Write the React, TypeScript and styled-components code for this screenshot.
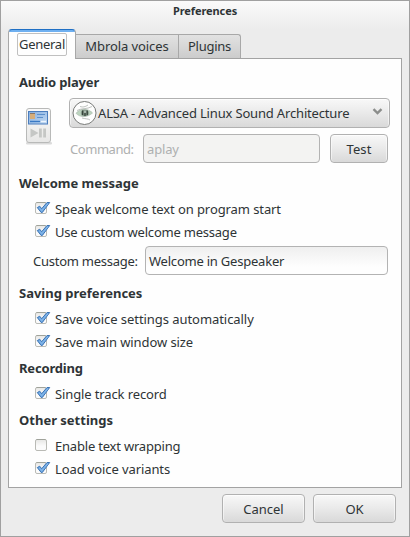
import React from "react";
import styled, { createGlobalStyle, css } from "styled-components";

const GlobalStyle = createGlobalStyle`
  body { margin: 0; }
  * { box-sizing: border-box; }
`;

const raised = css`
  border: 1px solid #b1b1b1;
  border-radius: 4px;
  background: linear-gradient(#f8f8f8, #ebebeb 45%, #d9d9d9);
  box-shadow: inset 0 1px 0 #fdfdfd, inset 1px 0 0 rgba(255, 255, 255, 0.5),
    inset -1px 0 0 rgba(255, 255, 255, 0.5);
`;

const Dialog = styled.main`
  display: flex;
  flex-direction: column;
  width: 410px;
  height: 537px;
  border: 1px solid #a0a0a0;
  background: linear-gradient(#fafafa, #ececec 28px);
  color: #2e3436;
  font: 13px/20px "Noto Sans", "Open Sans", sans-serif;
  white-space: nowrap;
`;

const Title = styled.h1`
  margin: 0;
  height: 28px;
  font-size: 11px;
  line-height: 20px;
  font-weight: bold;
  letter-spacing: -0.08px;
  text-align: center;
`;

const Tracked = styled.span<{ $spacing?: number }>`
  letter-spacing: ${(p) => p.$spacing ?? 0}px;
`;

const TabBar = styled.nav`
  display: flex;
  align-items: flex-end;
  height: 30px;
  margin: 0 7px -1px;
`;

const Tab = styled.div<{ $width: number; $last?: boolean }>`
  display: flex;
  justify-content: center;
  width: ${(p) => p.$width}px;
  height: 25px;
  padding-top: 1px;
  border: 1px solid #a8a8a8;
  border-width: 1px 1px 0 0;
  border-top-right-radius: ${(p) => (p.$last ? 3 : 0)}px;
  background: linear-gradient(#e2e2e2, #cbcbcb);
`;

const ActiveTab = styled.div`
  width: 68px;
  height: 30px;
  padding: 3px 0 0 8px;
  border: 1px solid #a8a8a8;
  border-top: 1px solid #1f6fc4;
  border-bottom: 0;
  border-radius: 4px 4px 0 0;
  background: linear-gradient(#6fb0f0 2px, #fefefe 2px);
  z-index: 1;
`;

const FocusRing = styled.div`
  width: 50px;
  height: 23px;
  padding-left: 1px;
  border: 1px solid #c0c0c0;
  border-radius: 2px;
  line-height: 21px;
`;

const Panel = styled.div`
  width: 394px;
  height: 430px;
  margin-left: 7px;
  padding: 13px 0 0 10px;
  border: 1px solid #a3a3a3;
  background: #fefefe;
`;

const Section = styled.section<{ $after?: number }>`
  margin-bottom: ${(p) => p.$after ?? 3}px;
`;

const Heading = styled.h2`
  margin: 0;
  height: 26px;
  font-size: 13px;
  line-height: 20px;
  font-weight: bold;
`;

const AudioGrid = styled.div`
  display: grid;
  grid-template-columns: 50px 321px;
  align-items: start;
`;

const PlayerIcon = styled.svg`
  width: 28px;
  height: 38px;
  margin: 9px 0 0 6px;
`;

const Combo = styled.div`
  ${raised}
  display: flex;
  align-items: center;
  height: 30px;
  padding: 0 6px 0 2px;
  margin-bottom: 6px;
`;

const ComboLabel = styled.span`
  flex: 1;
  padding-left: 1px;
  letter-spacing: -0.17px;
`;

const ComboArrow = styled.svg`
  width: 11px;
  height: 8px;
  margin-bottom: 2px;
`;

const CommandRow = styled.div`
  display: flex;
  height: 29px;
`;

const FieldLabel = styled.label<{ $width: number; $indent: number; $spacing: number; $muted?: boolean }>`
  width: ${(p) => p.$width}px;
  padding-left: ${(p) => p.$indent}px;
  line-height: 30px;
  letter-spacing: ${(p) => p.$spacing}px;
  color: ${(p) => (p.$muted ? "#aeb0b0" : "inherit")};
`;

const Entry = styled.div<{ $width: number; $disabled?: boolean }>`
  width: ${(p) => p.$width}px;
  height: 29px;
  padding-left: 3px;
  border: 1px solid #b3b3b3;
  border-radius: 4px;
  line-height: 28px;
  color: ${(p) => (p.$disabled ? "#aeb0b0" : "inherit")};
  background: ${(p) => (p.$disabled ? "#f3f3f2" : "linear-gradient(#efefef, #fefefe 20px)")};
`;

const Button = styled.button<{ $width: number; $left?: number }>`
  ${raised}
  width: ${(p) => p.$width}px;
  height: 29px;
  margin-left: ${(p) => p.$left ?? 0}px;
  padding: 0;
  color: inherit;
  font: inherit;
  line-height: 28px;
`;

const CheckRow = styled.label`
  display: flex;
  height: 23px;
  padding-left: 16px;
`;

const CheckIcon = styled.svg`
  width: 16px;
  height: 16px;
  margin: 1px 4px 0 0;
`;

const MessageRow = styled.div`
  display: flex;
  margin-top: 1px;
`;

const Footer = styled.footer`
  display: flex;
  justify-content: flex-end;
  padding: 6px 13px 0 0;
`;

function CheckItem({ text, checked = true, spacing = 0 }: { text: string; checked?: boolean; spacing?: number }) {
  return (
    <CheckRow>
      <CheckIcon viewBox="0 0 16 16">
        <defs>
          <linearGradient id="box" x2="0" y2="1">
            <stop stopColor="#e6e6e4" />
            <stop offset=".6" stopColor="#fbfbfb" />
          </linearGradient>
        </defs>
        <rect x=".5" y="2.5" width="11" height="11" rx="1.5" fill="url(#box)" stroke="#b9bab5" />
        <path d="M1.5 2.5h9" stroke="#a0a39b" />
        {checked && (
          <>
            <path
              d="M2.3 7.6 4.7 6.2 6.7 8.7 12 2.5H14.7L7.3 12.5H6.2Z"
              fill="#6aa5df"
              stroke="#3a72b4"
              strokeLinejoin="round"
            />
            <path d="m4.2 7.8 2.5 2.8L13 3.5" fill="none" stroke="#80b4e8" strokeWidth="1.2" />
          </>
        )}
      </CheckIcon>
      <Tracked $spacing={spacing}>{text}</Tracked>
    </CheckRow>
  );
}

function Player() {
  return (
    <PlayerIcon viewBox="0 0 28 38">
      <defs>
        <linearGradient id="body" x2="0" y2="1">
          <stop stopColor="#f9f9f9" />
          <stop offset="1" stopColor="#e7e7e6" />
        </linearGradient>
        <linearGradient id="screen" x2="1" y2="1">
          <stop stopColor="#85afe0" />
          <stop offset="1" stopColor="#c2d9f2" />
        </linearGradient>
      </defs>
      <rect x="1" y="35" width="26" height="2.5" rx="1.2" fill="#ccc" opacity=".7" />
      <rect x="1.5" y="1.5" width="24" height="34" rx="2.5" fill="url(#body)" stroke="#b8b9b8" />
      <rect x="3.5" y="4.5" width="19" height="12.500" fill="url(#screen)" stroke="#4b7dbd" />
      <path d="M5 7h5v5H5z" fill="#d6ad79" />
      <path d="M5 6.5h5" stroke="#8b7868" />
      <path d="M12 7.5h8M12 10.5h6" stroke="#5d90cb" />
      <path d="M5 14.5h10" stroke="#3979c4" strokeWidth="1.4" />
      <path d="M16 14.5h5" stroke="#eef6ff" strokeWidth="1.4" />
      <path d="M5.500 21.500v9l8-4.500zM14 21.500h2.800v9H14zM18.200 21.500H21v9h-2.800z" fill="#c5c7c5" />
    </PlayerIcon>
  );
}

function AlsaLogo() {
  return (
    <svg width="25" height="26" viewBox="0 0 25 26">
      <circle cx="12.5" cy="13" r="11.5" fill="#fefefe" stroke="#777977" />
      <path d="M4 13.3C8 8 16 8 20.5 13c-5 4.500-12 5-16.500.3Z" fill="#bcd4bf" stroke="#a5b6a8" strokeWidth=".6" />
      <path
        d="M5 10.500C9 8 15 9.500 20 6.500M8 6.500c3 1 5 .5 8-1.500M10 18c3 1 6 .5 8 2"
        fill="none"
        stroke="#a2a8a3"
        strokeWidth=".7"
      />
      <ellipse cx="12.8" cy="13" rx="4" ry="3.2" fill="#84978a" />
      <path d="M10.700 10.500v4.500M13 13v3M15.200 10.500v4.500" stroke="#28362c" strokeWidth="1.1" />
      <path d="M13 10.800v2" stroke="#e5eee6" strokeWidth=".8" />
    </svg>
  );
}

export default function App() {
  return (
    <>
      <GlobalStyle />
      <Dialog>
        <Title>Preferences</Title>
        <TabBar>
          <ActiveTab>
            <FocusRing>
              <Tracked $spacing={-0.28}>General</Tracked>
            </FocusRing>
          </ActiveTab>
          <Tab $width={103}>
            <Tracked $spacing={-0.08}>Mbrola voices</Tracked>
          </Tab>
          <Tab $width={62} $last>
            <Tracked $spacing={-0.25}>Plugins</Tracked>
          </Tab>
        </TabBar>
        <Panel>
          <Section $after={10}>
            <Heading>
              <Tracked $spacing={-0.15}>Audio player</Tracked>
            </Heading>
            <AudioGrid>
              <Player />
              <div>
                <Combo>
                  <AlsaLogo />
                  <ComboLabel>ALSA - Advanced Linux Sound Architecture</ComboLabel>
                  <ComboArrow viewBox="0 0 11 8">
                    <path d="M1.5 1.2 5.5 5 9.5 1.2" fill="none" stroke="#8b8d8b" strokeWidth="2.4" />
                  </ComboArrow>
                </Combo>
                <CommandRow>
                  <FieldLabel $width={74} $indent={1} $spacing={-0.45} $muted>
                    Command:
                  </FieldLabel>
                  <Entry $width={177} $disabled>
                    <Tracked $spacing={-0.15}>aplay</Tracked>
                  </Entry>
                  <Button $width={58} $left={10}>
                    <Tracked $spacing={0.1}>Test</Tracked>
                  </Button>
                </CommandRow>
              </div>
            </AudioGrid>
          </Section>
          <Section $after={7}>
            <Heading>Welcome message</Heading>
            <CheckItem text="Speak welcome text on program start" spacing={-0.09} />
            <CheckItem text="Use custom welcome message" spacing={-0.22} />
            <MessageRow>
              <FieldLabel $width={126} $indent={14} $spacing={-0.26}>
                Custom message:
              </FieldLabel>
              <Entry $width={243}>
                <Tracked $spacing={-0.22}>Welcome in Gespeaker</Tracked>
              </Entry>
            </MessageRow>
          </Section>
          <Section>
            <Heading>Saving preferences</Heading>
            <CheckItem text="Save voice settings automatically" spacing={-0.06} />
            <CheckItem text="Save main window size" spacing={-0.08} />
          </Section>
          <Section>
            <Heading>
              <Tracked $spacing={-0.18}>Recording</Tracked>
            </Heading>
            <CheckItem text="Single track record" spacing={-0.12} />
          </Section>
          <Section>
            <Heading>Other settings</Heading>
            <CheckItem text="Enable text wrapping" checked={false} spacing={-0.2} />
            <CheckItem text="Load voice variants" spacing={-0.1} />
          </Section>
        </Panel>
        <Footer>
          <Button $width={83}>Cancel</Button>
          <Button $width={83} $left={8}>
            OK
          </Button>
        </Footer>
      </Dialog>
    </>
  );
}
